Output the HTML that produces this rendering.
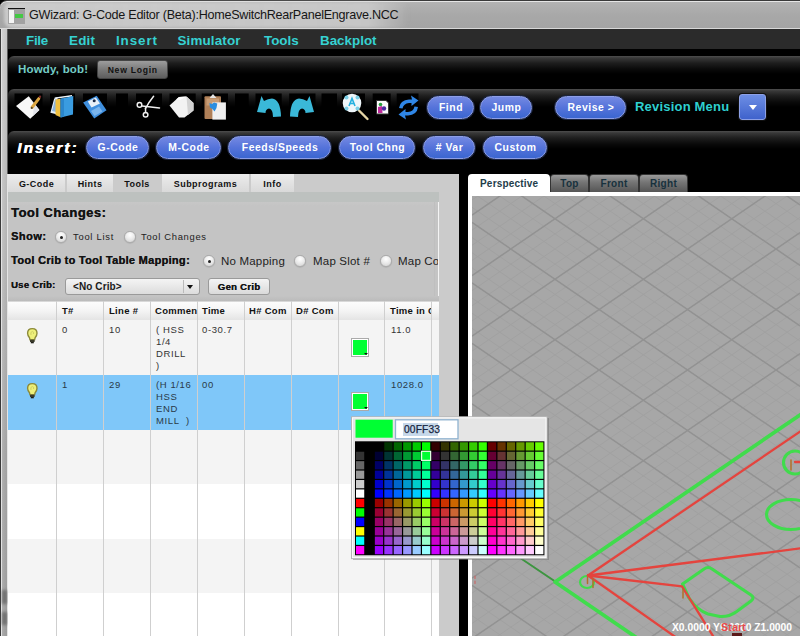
<!DOCTYPE html>
<html><head><meta charset="utf-8">
<style>
*{box-sizing:border-box}
html,body{margin:0;padding:0;width:800px;height:636px;overflow:hidden;background:#000;font-family:"Liberation Sans",sans-serif}
.a{position:absolute}
.t{position:absolute;white-space:nowrap;line-height:1}
#title{left:0;top:0;width:800px;height:30px;background:linear-gradient(#b4b4b4,#a8a8a8 50%,#a4a4a4);border-top:1px solid #3a3a3a;border-bottom:1px solid #2a2a2a;border-top-left-radius:7px;box-shadow:inset 0 1px 0 #e6e6e6,inset 0 -1px 0 #d8d8d8}
#glow{left:4px;top:2px;width:405px;height:26px;background:linear-gradient(90deg,rgba(215,215,215,.7),rgba(205,205,205,.8) 90%,rgba(200,200,200,0));border-radius:8px;filter:blur(1.5px)}
#lframe{left:0;top:29px;width:8px;height:607px;background:linear-gradient(90deg,#4a4a4a 0,#4a4a4a 1px,#e4e4e4 1px,#d0d0d0 2px,#b4b4b4 3px,#b8b8b8 6px,#dedede 6px,#dcdcdc 7px,#6c6c6c 7px)}
#menu{left:8px;top:30px;width:792px;height:19px;background:#2b2b2b}
.mi{position:absolute;top:34px;font-weight:bold;font-size:13.4px;color:#36d2d2;line-height:1}
.panel{position:absolute;left:8px;width:792px;border-radius:6px 0 0 0;background:linear-gradient(#4e4e4e 0,#383838 2px,#1e1e1e 7px,#0a0a0a 13px,#000 18px)}
.bb{position:absolute;height:23px;border-radius:12px;background:linear-gradient(#7489e2,#5573da 50%,#3b66d0);border:1px solid #8d9ee6;box-shadow:0 0 0 1px #1a2440;color:#fff;font-weight:bold;font-size:10.4px;text-align:center;line-height:21px;letter-spacing:.55px;text-indent:1px}
.tab{position:absolute;top:174px;height:18px;background:linear-gradient(#ececec,#d9d9d9);color:#111;font-weight:bold;font-size:9px;text-align:center;line-height:20px;letter-spacing:.45px}
.lb{position:absolute;font-weight:bold;color:#141414;line-height:1;white-space:nowrap;text-shadow:.25px 0 0 #141414}
.rad{position:absolute;width:11.5px;height:11.5px;margin:.25px 0 0 .25px;border-radius:50%;background:radial-gradient(circle at 50% 30%,#fff,#ececec 45%,#cfcfcf);border:1px solid #a8a8a8;box-shadow:0 .5px 1px rgba(0,0,0,.15)}
.rad.on::after{content:"";position:absolute;left:3.25px;top:3.25px;width:3px;height:3px;border-radius:50%;background:#222}
.rt{position:absolute;font-size:11.5px;color:#222;line-height:1;white-space:nowrap;letter-spacing:.2px}
.col{position:absolute;top:301px;width:1px;height:335px;background:#cfcfcf}
.hd{position:absolute;top:306px;font-weight:bold;font-size:9.5px;color:#111;line-height:1;white-space:nowrap;letter-spacing:.3px}
.cell{position:absolute;font-size:9.5px;color:#333;line-height:12px;white-space:nowrap;letter-spacing:.6px}
.rtab{position:absolute;top:174px;height:18px;border-radius:4px 4px 0 0;background:linear-gradient(#9a9a9a,#777 40%,#555);border:1px solid #333;border-bottom:none;color:#17313d;font-weight:bold;font-size:10px;text-align:center;line-height:17px;letter-spacing:.3px}
.ico{position:absolute;top:94px;height:27px;background:#0f0f0f}
</style></head><body>

<!-- title bar -->
<div id="title" class="a"></div><div id="glow" class="a"></div>
<div class="a" style="left:8px;top:8px;width:16.5px;height:15.5px;background:#a2a2a2;border-top:1.6px solid #111"></div>
<div class="a" style="left:9px;top:9.6px;width:4.5px;height:13.6px;background:#f4f4f4"></div>
<div class="a" style="left:15px;top:14.2px;width:8.3px;height:4px;background:#44c844"></div>
<div class="t" style="left:29px;top:9px;font-size:12.6px;color:#161616;letter-spacing:-0.27px">GWizard: G-Code Editor (Beta):HomeSwitchRearPanelEngrave.NCC</div>

<div class="a" style="left:0;top:29px;width:1px;height:607px;background:#3a3a3a"></div>
<div class="a" style="left:1px;top:29px;width:1px;height:607px;background:#e2e2e2"></div>
<div class="a" style="left:2px;top:29px;width:5px;height:607px;background:linear-gradient(90deg,rgba(255,255,255,.12),rgba(0,0,0,0) 50%,rgba(0,0,0,.04)),linear-gradient(#cbcbcb,#bababa 35%,#a8a8a8 70%,#a2a2a2)"></div>
<div class="a" style="left:7px;top:29px;width:1px;height:145px;background:#5a5a5a"></div>
<div class="a" style="left:7px;top:174px;width:1px;height:462px;background:#e4e4e4"></div>
<div class="a" style="left:2px;top:590px;width:5px;height:14px;background:#5a5a5a;filter:blur(1.5px);opacity:.7"></div>
<div class="a" style="left:2px;top:612px;width:5px;height:13px;background:#5a5a5a;filter:blur(1.5px);opacity:.7"></div>
<div id="menu" class="a"></div>
<div class="mi" style="left:26px;letter-spacing:-.3px">File</div>
<div class="mi" style="left:69px;letter-spacing:.2px">Edit</div>
<div class="mi" style="left:116px;letter-spacing:.9px">Insert</div>
<div class="mi" style="left:177.5px;letter-spacing:.15px">Simulator</div>
<div class="mi" style="left:264px">Tools</div>
<div class="mi" style="left:320px">Backplot</div>

<!-- panel 1 -->
<div class="panel" style="top:56px;height:31px"></div>
<div class="t" style="left:18px;top:64px;font-weight:bold;font-size:11.5px;color:#74cdc6;letter-spacing:.2px">Howdy, bob!</div>
<div class="a" style="left:97px;top:60px;width:71px;height:19px;border-radius:3px;background:linear-gradient(#9d9d9d,#7a7a7a 50%,#5e5e5e);border:1px solid #444"></div>
<div class="t" style="left:97px;top:65.5px;width:71px;text-align:center;font-weight:bold;font-size:8.6px;color:#111;letter-spacing:.75px;text-indent:.5px">New Login</div>

<!-- panel 2 toolbar -->
<div class="panel" style="top:89px;height:39px"></div>
<svg class="a" style="left:0;top:0" width="470" height="130" viewBox="0 0 470 130">
<g fill="#000"><rect x="14.5" y="93.5" width="28.0" height="28"/><rect x="50.0" y="93.5" width="25.0" height="28"/><rect x="83.0" y="93.5" width="24.0" height="28"/><rect x="116.0" y="93.5" width="12.0" height="28"/><rect x="136.0" y="93.5" width="26.0" height="28"/><rect x="169.5" y="93.5" width="26.2" height="28"/><rect x="201.7" y="93.5" width="26.3" height="28"/><rect x="235.0" y="93.5" width="13.7" height="28"/><rect x="255.5" y="93.5" width="26.2" height="28"/><rect x="289.2" y="93.5" width="26.3" height="28"/><rect x="321.5" y="93.5" width="15.5" height="28"/><rect x="342.0" y="93.5" width="23.0" height="28"/><rect x="372.7" y="93.5" width="18.0" height="28"/><rect x="396.7" y="93.5" width="21.8" height="28"/></g>
<!-- new doc -->
<path d="M16,106 L28.7,96.3 L39.4,110 L30.2,118.7 Z" fill="#f8f8f8"/>
<path d="M34,103 L39.4,110 L33,116 Z" fill="#e2e4ea"/>
<line x1="32" y1="107.5" x2="38.8" y2="98.6" stroke="#dca640" stroke-width="3" stroke-linecap="round"/>
<line x1="31.3" y1="108.6" x2="32.3" y2="107.2" stroke="#333" stroke-width="1.6"/>
<circle cx="40" cy="96.8" r="1.2" fill="#7a2a2a"/>
<!-- open book -->
<path d="M50.4,112.8 L54.2,98.4 L57.5,97.2 L57.5,114.5 Z" fill="#e8f0f8"/>
<path d="M52,111 L55,99.5 L56.5,99 L56.5,112 Z" fill="#8ab4e0"/>
<path d="M54.5,97.5 L72,95 L72,96.5 L55.5,98.8 Z" fill="#eef6fc"/>
<path d="M55.5,99.6 L60.6,98.8 L60.6,117.3 L55.5,115 Z" fill="#f0c040"/>
<path d="M60.6,98.8 L73.3,96 L73,114.5 L60.6,117.5 Z" fill="#3a9ce0"/>
<path d="M60.6,98.8 L64,98 L64,116.7 L60.6,117.5 Z" fill="#2a86cc"/>
<!-- floppy -->
<path d="M83.1,102.6 L96.7,95.8 L106.5,110.3 L94.2,118.4 Z" fill="#3f8fde"/>
<path d="M87.8,101.5 L95.8,97.5 L100,103.5 L91.5,107.5 Z" fill="#e8f0f8"/>
<circle cx="94.2" cy="100.8" r="1.5" fill="#1a2a4a"/>
<path d="M91,111 L99,106.5 L102.5,111.5 L94.5,116 Z" fill="#7ab4ec"/>
<!-- scissors -->
<g stroke="#f0f0f0" stroke-width="1.5" fill="none" stroke-linecap="round">
<path d="M145.5,108.5 Q149,102 153.6,96.3"/>
<line x1="142" y1="106" x2="159.5" y2="108"/>
<line x1="145.5" y1="108" x2="145.6" y2="112.4"/>
<circle cx="139.5" cy="104.9" r="2.3"/>
<circle cx="145.6" cy="114.7" r="2.3"/>
</g>
<!-- copy -->
<path d="M169.5,105.5 L179,97 L186.5,96.5 L193.5,103 L193.5,110.5 L184.5,117.5 L179,117.5 Z" fill="#f2f2f2"/>
<path d="M186.5,96.5 L193.5,103 L193.5,110.5 L188,115 Z" fill="#d2d2d2"/>
<path d="M176,99.5 L179,97 L186.5,96.5 L180,100 Z" fill="#ffffff"/>
<!-- paste -->
<rect x="204.5" y="96.3" width="16.5" height="22.7" rx="1" fill="#b08058"/>
<rect x="206.5" y="98.5" width="12.5" height="7" fill="#c89c74"/>
<path d="M209.5,98 L213,94 L216.5,98 Z" fill="#e4e4e4"/>
<rect x="212.4" y="102.4" width="13.5" height="17.2" fill="#f0f0f0"/>
<path d="M209.4,103 L212,104 L214,102.4 L217.3,103.5 L216.5,108 L214.5,111.6 L212.5,109 L210,107.5 Z" fill="#2a8ee0"/>
<!-- undo -->
<path id="undo" d="M257,112 L261.5,96 L264,101 Q268,98.5 272,98.5 Q280.5,99.5 281,116.5 L273,117 Q273,109 269,108.5 Q265.5,109 265.5,113 Z" fill="#3ab8d8"/>
<!-- redo -->
<path d="M257,112 L261.5,96 L264,101 Q268,98.5 272,98.5 Q280.5,99.5 281,116.5 L273,117 Q273,109 269,108.5 Q265.5,109 265.5,113 Z" fill="#3ab8d8" transform="translate(571,0) scale(-1,1)"/>
<!-- magnifier -->
<line x1="359" y1="110.5" x2="367.5" y2="119" stroke="#e6d6a6" stroke-width="2.4" stroke-linecap="round"/>
<circle cx="352" cy="103" r="9.3" fill="#eef6fa"/>
<circle cx="346.5" cy="97.5" r="2" fill="#7cd0e8"/><circle cx="357.5" cy="97.5" r="2" fill="#7cd0e8"/><circle cx="346.5" cy="108.5" r="2" fill="#7cd0e8"/><circle cx="357.5" cy="108.5" r="2" fill="#7cd0e8"/>
<path d="M349,106 L352,98.5 L355,106 M350.2,103.5 L353.8,103.5" stroke="#22b0e0" stroke-width="1.6" fill="none"/>
<!-- small doc -->
<path d="M376.5,100.5 L386,100.5 L388.5,103 L388.5,114 L376.5,114 Z" fill="#fafafa" stroke="#333" stroke-width="1"/>
<circle cx="380.5" cy="104.5" r="1.8" fill="#2aa040"/>
<path d="M378,107 L382,106 L382.5,113 L378,113 Z" fill="#c02a9a"/>
<circle cx="384" cy="108.5" r="2.2" fill="#4a2aa0"/>
<!-- refresh -->
<path d="M399,108 Q400,100 409,99.5 L412,99.5 L411,95.5 L418.5,100.5 L411.5,106 L411.5,103 L409,103 Q403.5,103.5 402.5,108.5 Z" fill="#2f86e6"/>
<path d="M418,107 Q417,115 408,115.5 L405,115.5 L406,119.5 L398.5,114.5 L405.5,109 L405.5,112 L408,112 Q413.5,111.5 414.5,106.5 Z" fill="#2f86e6"/>
</svg>


<div class="bb" style="left:427px;top:96px;width:47px">Find</div>
<div class="bb" style="left:480px;top:96px;width:52px">Jump</div>
<div class="bb" style="left:555px;top:96px;width:71px">Revise &gt;</div>
<div class="t" style="left:635px;top:100px;font-weight:bold;font-size:13px;color:#2fd0d0;letter-spacing:.2px">Revision Menu</div>
<div class="a" style="left:739px;top:94px;width:27px;height:26px;border-radius:3px;background:linear-gradient(#6d8ee4,#3f62cc);border:1px solid #8da0e6;box-shadow:0 0 0 1px #111"></div>
<div class="a" style="left:748.5px;top:104.5px;width:0;height:0;border-left:4.5px solid transparent;border-right:4.5px solid transparent;border-top:5.5px solid #fff"></div>

<!-- panel 3 insert -->
<div class="panel" style="top:131px;height:43px"></div>
<div class="t" style="left:17px;top:140px;font-weight:bold;font-style:italic;font-size:15.5px;color:#fff;letter-spacing:2px;text-shadow:.6px 0 0 #fff">Insert:</div>
<div class="bb" style="left:86px;top:136px;width:63px">G-Code</div>
<div class="bb" style="left:156px;top:136px;width:65px">M-Code</div>
<div class="bb" style="left:228px;top:136px;width:103px">Feeds/Speeds</div>
<div class="bb" style="left:339px;top:136px;width:76px">Tool Chng</div>
<div class="bb" style="left:423px;top:136px;width:52px"># Var</div>
<div class="bb" style="left:483px;top:136px;width:64px">Custom</div>

<!-- left panel -->
<div class="a" style="left:8px;top:174px;width:451px;height:462px;background:#cbcbcb"></div>
<div class="tab" style="left:8px;width:57px">G-Code</div>
<div class="tab" style="left:67px;width:46px">Hints</div>
<div class="tab" style="left:114px;width:46px;background:#cbcbcb;line-height:21px">Tools</div>
<div class="tab" style="left:162px;width:87px">Subprograms</div>
<div class="tab" style="left:251px;width:43px">Info</div>
<div class="a" style="left:8px;top:192px;width:431px;height:10px;background:#bdc1bf"></div>
<div class="a" style="left:8px;top:202px;width:431px;height:434px;background:linear-gradient(#c7c7c7,#c4c4c4 4px)"></div>
<div class="a" style="left:438px;top:202px;width:1px;height:434px;background:#f4f4f4"></div><div class="a" style="left:434px;top:202px;width:1px;height:99px;background:#bfbfbf"></div>

<div class="lb" style="left:11px;top:206px;font-size:13px;letter-spacing:.45px">Tool Changes:</div>
<div class="lb" style="left:11px;top:231px;font-size:11px;letter-spacing:.45px">Show:</div>
<div class="rad on" style="left:55px;top:231px"></div>
<div class="rt" style="left:73px;top:231.5px;font-size:9.4px;letter-spacing:.75px">Tool List</div>
<div class="rad" style="left:124px;top:231px"></div>
<div class="rt" style="left:141px;top:231.5px;font-size:9.4px;letter-spacing:.7px">Tool Changes</div>

<div class="lb" style="left:11px;top:255px;font-size:11px;letter-spacing:.3px">Tool Crib to Tool Table Mapping:</div>
<div class="rad on" style="left:203px;top:255px"></div>
<div class="rt" style="left:221px;top:256px">No Mapping</div>
<div class="rad" style="left:294px;top:255px"></div>
<div class="rt" style="left:313px;top:256px">Map Slot #</div>
<div class="rad" style="left:380px;top:255px"></div>
<div style="position:absolute;left:398px;top:250px;width:40px;height:20px;overflow:hidden"><div class="rt" style="left:0;top:6px">Map Coords</div></div>

<div class="lb" style="left:11px;top:280px;font-size:9.5px;letter-spacing:.25px">Use Crib:</div>
<div class="a" style="left:65px;top:278px;width:135px;height:17px;border-radius:3px;background:linear-gradient(#f4f4f4,#dcdcdc);border:1px solid #9a9a9a"></div>
<div class="a" style="left:183px;top:280px;width:1px;height:13px;background:#bbb"></div>
<div class="a" style="left:187px;top:285px;width:0;height:0;border-left:3.5px solid transparent;border-right:3.5px solid transparent;border-top:4.5px solid #111"></div>
<div class="lb" style="left:73px;top:282px;font-size:10px;letter-spacing:.1px;text-shadow:none;color:#1a1a1a">&lt;No Crib&gt;</div>
<div class="a" style="left:208px;top:278px;width:62px;height:17px;border-radius:3px;background:linear-gradient(#f4f4f4,#dadada);border:1px solid #9a9a9a"></div>
<div class="lb" style="left:208px;top:282px;width:62px;text-align:center;font-size:9.5px;letter-spacing:.3px">Gen Crib</div>

<!-- table -->
<div class="a" style="left:8px;top:296px;width:431px;height:6px;background:linear-gradient(#c4c4c4,#b9b9b9)"></div><div class="a" style="left:8px;top:301px;width:431px;height:1px;background:#d8d8d8"></div><div class="a" style="left:8px;top:302px;width:431px;height:18px;background:linear-gradient(#fcfcfc,#f4f4f4 50%,#e4e4e4)"></div><div class="a" style="left:8px;top:320px;width:431px;height:1px;background:#cbcbcb"></div>
<div class="a" style="left:8px;top:320px;width:431px;height:55px;background:#f4f4f4"></div>
<div class="a" style="left:8px;top:375px;width:431px;height:55px;background:#7fc7f9"></div>
<div class="a" style="left:8px;top:430px;width:431px;height:54px;background:#f4f4f4"></div>
<div class="a" style="left:8px;top:484px;width:431px;height:55px;background:#fff"></div>
<div class="a" style="left:8px;top:539px;width:431px;height:54px;background:#f4f4f4"></div>
<div class="a" style="left:8px;top:593px;width:431px;height:43px;background:#fff"></div>
<div class="col" style="left:56px"></div>
<div class="col" style="left:103px"></div>
<div class="col" style="left:150px"></div>
<div class="col" style="left:197px"></div>
<div class="col" style="left:244px"></div>
<div class="col" style="left:291px"></div>
<div class="col" style="left:338px"></div>
<div class="col" style="left:384px"></div>
<div class="col" style="left:431px"></div>

<div class="hd" style="left:62px">T#</div>
<div class="hd" style="left:109px">Line #</div>
<div style="position:absolute;left:151px;top:301px;width:46px;height:19px;overflow:hidden"><div class="hd" style="left:4px;top:5px">Comment</div></div>
<div class="hd" style="left:202px">Time</div>
<div style="position:absolute;left:245px;top:301px;width:43px;height:19px;overflow:hidden"><div class="hd" style="left:4px;top:5px">H# Com</div></div>
<div style="position:absolute;left:292px;top:301px;width:43px;height:19px;overflow:hidden"><div class="hd" style="left:4px;top:5px">D# Com</div></div>
<div style="position:absolute;left:386px;top:301px;width:45px;height:19px;overflow:hidden"><div class="hd" style="left:4px;top:5px">Time in Cut</div></div>

<div class="cell" style="left:62px;top:323.5px">0</div>
<div class="cell" style="left:109px;top:323.5px">10</div>
<div class="cell" style="left:156px;top:323.5px">( HSS<br>1/4<br>DRILL<br>)</div>
<div class="cell" style="left:202px;top:323.5px">0-30.7</div>
<div class="cell" style="left:391px;top:323.5px">11.0</div>
<div class="cell" style="left:62px;top:378.5px;color:#2a3a48">1</div>
<div class="cell" style="left:109px;top:378.5px;color:#2a3a48">29</div>
<div class="cell" style="left:156px;top:378.5px;color:#2a3a48">(H 1/16<br>HSS<br>END<br>MILL&nbsp; )</div>
<div class="cell" style="left:202px;top:378.5px;color:#2a3a48">00</div>
<div class="cell" style="left:391px;top:378.5px;color:#2a3a48">1028.0</div>

<!-- swatches -->
<div class="a" style="left:351px;top:338px;width:18px;height:19px;background:#fff;border:1px solid #aaa"><div class="a" style="left:1px;top:1px;width:14px;height:15px;background:#00ff33"></div><div class="a" style="left:12px;top:14px;border-left:2px solid transparent;border-right:2px solid transparent;border-top:2px solid #111"></div></div>
<div class="a" style="left:351px;top:392px;width:18px;height:19px;background:#fff;border:1px solid #aaa"><div class="a" style="left:1px;top:1px;width:14px;height:15px;background:#00ff33"></div><div class="a" style="left:12px;top:14px;border-left:2px solid transparent;border-right:2px solid transparent;border-top:2px solid #111"></div></div>

<!-- bulbs -->
<svg class="a" style="left:20px;top:320px" width="30" height="80" viewBox="20 320 30 80"><g><path d="M32.3,328.6 Q37,328.6 37,333.3 Q37,335.6 35.1,337.8 L34.6,339.8 L30,339.8 L29.5,337.8 Q27.6,335.6 27.6,333.3 Q27.6,328.6 32.3,328.6 Z" fill="#eef07a" stroke="#8c8a3a" stroke-width="1.4"/>
<path d="M31,335 Q30,332 32.3,331.5 Q34.3,331.8 33.5,334" stroke="#c8c860" stroke-width="0.8" fill="none"/>
<rect x="30" y="339.8" width="4.6" height="2.2" fill="#3a3a2a"/>
<rect x="30.8" y="342" width="3" height="1.3" fill="#1e1e16"/></g><g transform="translate(0,55)"><path d="M32.3,328.6 Q37,328.6 37,333.3 Q37,335.6 35.1,337.8 L34.6,339.8 L30,339.8 L29.5,337.8 Q27.6,335.6 27.6,333.3 Q27.6,328.6 32.3,328.6 Z" fill="#eef07a" stroke="#8c8a3a" stroke-width="1.4"/>
<path d="M31,335 Q30,332 32.3,331.5 Q34.3,331.8 33.5,334" stroke="#c8c860" stroke-width="0.8" fill="none"/>
<rect x="30" y="339.8" width="4.6" height="2.2" fill="#3a3a2a"/>
<rect x="30.8" y="342" width="3" height="1.3" fill="#1e1e16"/></g></svg>


<!-- right side -->
<div class="a" style="left:468px;top:174px;width:82px;height:22px;background:#fff;border-radius:4px 4px 0 0"></div>
<div class="t" style="left:480px;top:179px;font-weight:bold;font-size:10px;color:#1e3d4a;letter-spacing:.2px">Perspective</div>
<div class="rtab" style="left:550px;width:39px">Top</div>
<div class="rtab" style="left:589px;width:50px">Front</div>
<div class="rtab" style="left:639px;width:49px">Right</div>
<div class="a" style="left:468px;top:192px;width:332px;height:444px;background:#fff"></div>
<svg class="a" style="left:472px;top:196px" width="328" height="440" viewBox="472 196 328 440">
<rect x="472" y="196" width="328" height="440" fill="#a7a7a7"/>
<g stroke="#a1a1a1" stroke-width="1" opacity="1"><line x1="472" y1="-19.55" x2="800" y2="204.93"/><line x1="472" y1="-4.43" x2="800" y2="220.05"/><line x1="472" y1="10.70" x2="800" y2="235.18"/><line x1="472" y1="25.82" x2="800" y2="250.30"/><line x1="472" y1="40.95" x2="800" y2="265.43"/><line x1="472" y1="56.07" x2="800" y2="280.55"/><line x1="472" y1="71.20" x2="800" y2="295.68"/><line x1="472" y1="86.32" x2="800" y2="310.80"/><line x1="472" y1="101.45" x2="800" y2="325.93"/><line x1="472" y1="116.57" x2="800" y2="341.05"/><line x1="472" y1="131.70" x2="800" y2="356.18"/><line x1="472" y1="146.82" x2="800" y2="371.30"/><line x1="472" y1="161.95" x2="800" y2="386.43"/><line x1="472" y1="177.07" x2="800" y2="401.55"/><line x1="472" y1="192.20" x2="800" y2="416.68"/><line x1="472" y1="207.32" x2="800" y2="431.80"/><line x1="472" y1="222.45" x2="800" y2="446.93"/><line x1="472" y1="237.57" x2="800" y2="462.05"/><line x1="472" y1="252.70" x2="800" y2="477.18"/><line x1="472" y1="267.82" x2="800" y2="492.30"/><line x1="472" y1="282.95" x2="800" y2="507.43"/><line x1="472" y1="298.07" x2="800" y2="522.55"/><line x1="472" y1="313.20" x2="800" y2="537.68"/><line x1="472" y1="328.32" x2="800" y2="552.80"/><line x1="472" y1="343.45" x2="800" y2="567.93"/><line x1="472" y1="358.57" x2="800" y2="583.05"/><line x1="472" y1="373.70" x2="800" y2="598.18"/><line x1="472" y1="388.82" x2="800" y2="613.30"/><line x1="472" y1="403.95" x2="800" y2="628.43"/><line x1="472" y1="419.07" x2="800" y2="643.55"/><line x1="472" y1="434.20" x2="800" y2="658.68"/><line x1="472" y1="449.32" x2="800" y2="673.80"/><line x1="472" y1="464.45" x2="800" y2="688.93"/><line x1="472" y1="479.57" x2="800" y2="704.05"/><line x1="472" y1="494.70" x2="800" y2="719.18"/><line x1="472" y1="509.82" x2="800" y2="734.30"/><line x1="472" y1="524.95" x2="800" y2="749.43"/><line x1="472" y1="540.07" x2="800" y2="764.55"/><line x1="472" y1="555.20" x2="800" y2="779.68"/><line x1="472" y1="570.32" x2="800" y2="794.80"/><line x1="472" y1="585.45" x2="800" y2="809.93"/><line x1="472" y1="600.57" x2="800" y2="825.05"/><line x1="472" y1="615.70" x2="800" y2="840.18"/><line x1="472" y1="630.82" x2="800" y2="855.30"/><line x1="472" y1="199.93" x2="800" y2="-24.55"/><line x1="472" y1="215.05" x2="800" y2="-9.43"/><line x1="472" y1="230.18" x2="800" y2="5.70"/><line x1="472" y1="245.30" x2="800" y2="20.82"/><line x1="472" y1="260.43" x2="800" y2="35.95"/><line x1="472" y1="275.55" x2="800" y2="51.07"/><line x1="472" y1="290.68" x2="800" y2="66.20"/><line x1="472" y1="305.80" x2="800" y2="81.32"/><line x1="472" y1="320.93" x2="800" y2="96.45"/><line x1="472" y1="336.05" x2="800" y2="111.57"/><line x1="472" y1="351.18" x2="800" y2="126.70"/><line x1="472" y1="366.30" x2="800" y2="141.82"/><line x1="472" y1="381.43" x2="800" y2="156.95"/><line x1="472" y1="396.55" x2="800" y2="172.07"/><line x1="472" y1="411.68" x2="800" y2="187.20"/><line x1="472" y1="426.80" x2="800" y2="202.32"/><line x1="472" y1="441.93" x2="800" y2="217.45"/><line x1="472" y1="457.05" x2="800" y2="232.57"/><line x1="472" y1="472.18" x2="800" y2="247.70"/><line x1="472" y1="487.30" x2="800" y2="262.82"/><line x1="472" y1="502.43" x2="800" y2="277.95"/><line x1="472" y1="517.55" x2="800" y2="293.07"/><line x1="472" y1="532.68" x2="800" y2="308.20"/><line x1="472" y1="547.80" x2="800" y2="323.32"/><line x1="472" y1="562.93" x2="800" y2="338.45"/><line x1="472" y1="578.05" x2="800" y2="353.57"/><line x1="472" y1="593.18" x2="800" y2="368.70"/><line x1="472" y1="608.30" x2="800" y2="383.82"/><line x1="472" y1="623.43" x2="800" y2="398.95"/><line x1="472" y1="638.55" x2="800" y2="414.07"/><line x1="472" y1="653.68" x2="800" y2="429.20"/><line x1="472" y1="668.80" x2="800" y2="444.32"/><line x1="472" y1="683.93" x2="800" y2="459.45"/><line x1="472" y1="699.05" x2="800" y2="474.57"/><line x1="472" y1="714.18" x2="800" y2="489.70"/><line x1="472" y1="729.30" x2="800" y2="504.82"/><line x1="472" y1="744.43" x2="800" y2="519.95"/><line x1="472" y1="759.55" x2="800" y2="535.07"/><line x1="472" y1="774.68" x2="800" y2="550.20"/><line x1="472" y1="789.80" x2="800" y2="565.32"/><line x1="472" y1="804.93" x2="800" y2="580.45"/><line x1="472" y1="820.05" x2="800" y2="595.57"/><line x1="472" y1="835.18" x2="800" y2="610.70"/><line x1="472" y1="850.30" x2="800" y2="625.82"/><line x1="472" y1="865.43" x2="800" y2="640.95"/></g>
<g stroke="#929292" stroke-width="1.5" opacity="1"><line x1="472" y1="-19.55" x2="800" y2="204.93"/><line x1="472" y1="40.95" x2="800" y2="265.43"/><line x1="472" y1="101.45" x2="800" y2="325.93"/><line x1="472" y1="161.95" x2="800" y2="386.43"/><line x1="472" y1="222.45" x2="800" y2="446.93"/><line x1="472" y1="282.95" x2="800" y2="507.43"/><line x1="472" y1="343.45" x2="800" y2="567.93"/><line x1="472" y1="403.95" x2="800" y2="628.43"/><line x1="472" y1="464.45" x2="800" y2="688.93"/><line x1="472" y1="524.95" x2="800" y2="749.43"/><line x1="472" y1="585.45" x2="800" y2="809.93"/><line x1="472" y1="215.05" x2="800" y2="-9.43"/><line x1="472" y1="275.55" x2="800" y2="51.07"/><line x1="472" y1="336.05" x2="800" y2="111.57"/><line x1="472" y1="396.55" x2="800" y2="172.07"/><line x1="472" y1="457.05" x2="800" y2="232.57"/><line x1="472" y1="517.55" x2="800" y2="293.07"/><line x1="472" y1="578.05" x2="800" y2="353.57"/><line x1="472" y1="638.55" x2="800" y2="414.07"/><line x1="472" y1="699.05" x2="800" y2="474.57"/><line x1="472" y1="759.55" x2="800" y2="535.07"/><line x1="472" y1="820.05" x2="800" y2="595.57"/></g>
<g fill="none" stroke-linecap="round" stroke-linejoin="round">
<line x1="521" y1="558.5" x2="556" y2="582" stroke="#3c963f" stroke-width="1.8"/>
<polyline points="805,411.5 555,582 640,640" stroke="#40dc4c" stroke-width="3.7"/>
<ellipse cx="587" cy="582" rx="7" ry="6" stroke="#40dc4c" stroke-width="2.2"/>
<ellipse cx="795" cy="462.5" rx="11.5" ry="11.5" stroke="#40dc4c" stroke-width="3.1"/>
<ellipse cx="791" cy="514.5" rx="24.5" ry="15" stroke="#40dc4c" stroke-width="3.1"/>
<path d="M682.5,584 L704,569 Q708,566 712,569 L751,595 Q755,598 751,601 L736,612 Q729,617 720,616.5 L708,614 Q697,610 689,598 Z" stroke="#40dc4c" stroke-width="3.1"/>
<g stroke="#e4443e" stroke-width="2.3">
<line x1="588" y1="575.5" x2="805" y2="428.2"/>
<line x1="588" y1="575.5" x2="805" y2="547.8"/>
<polyline points="588,575.5 682,586.4 715.5,640"/>
<line x1="588" y1="575.5" x2="679.7" y2="640"/>
<line x1="795" y1="462" x2="805" y2="462"/>
</g>
<g stroke="#b0702a" stroke-width="1.5"><line x1="587.5" y1="577.5" x2="587.5" y2="583.5"/><line x1="593" y1="579" x2="593" y2="587.5"/><line x1="683" y1="589" x2="683" y2="598"/><line x1="791" y1="460" x2="791" y2="470"/></g>
<g stroke="#c86a6a" stroke-width="1.2"><line x1="475" y1="576" x2="475" y2="578.5"/><line x1="475" y1="581" x2="475" y2="583.5"/></g>
</g>
<text x="672" y="630.5" font-family="Liberation Sans" font-weight="bold" font-size="10.3" fill="#fff">X0.0000 Y0.0000 Z1.0000</text>
<text x="721" y="631" font-family="Liberation Sans" font-weight="bold" font-size="10.5" fill="#e84848" letter-spacing="0.2">Start</text>
<rect x="732" y="633" width="10" height="3" fill="#5a1a1a"/>
</svg>

<svg class="a" style="left:0;top:0" width="800" height="636" viewBox="0 0 800 636">
<rect x="353" y="418" width="196" height="142" fill="#6a6a6a" opacity="0.45"/>
<rect x="351.5" y="416.8" width="195.5" height="141.8" fill="#e5e5e5" stroke="#b4b4b4" stroke-width="1"/>
<rect x="352.5" y="417.8" width="193.5" height="139.8" fill="none" stroke="#fbfbfb" stroke-width="1"/>
<rect x="355.5" y="419.7" width="37.2" height="18" fill="#00ff33"/>
<rect x="395.5" y="419.8" width="62.5" height="19" fill="#fff" stroke="#8fb2cf" stroke-width="1.3"/>
<rect x="403" y="423" width="35" height="13" fill="#c6d8ea"/>
<text x="404" y="433" font-family="Liberation Sans" font-size="10.2" fill="#16243e" letter-spacing="0.15" stroke="#16243e" stroke-width="0.25">00FF33</text>
<rect x="355.00" y="441.30" width="189.40" height="113.96" fill="#000"/>
<rect x="384.29" y="442.30" width="8.23" height="8.23" fill="#003300"/>
<rect x="393.72" y="442.30" width="8.23" height="8.23" fill="#006600"/>
<rect x="403.15" y="442.30" width="8.23" height="8.23" fill="#009900"/>
<rect x="412.58" y="442.30" width="8.23" height="8.23" fill="#00cc00"/>
<rect x="422.01" y="442.30" width="8.23" height="8.23" fill="#00ff00"/>
<rect x="431.44" y="442.30" width="8.23" height="8.23" fill="#330000"/>
<rect x="440.87" y="442.30" width="8.23" height="8.23" fill="#333300"/>
<rect x="450.30" y="442.30" width="8.23" height="8.23" fill="#336600"/>
<rect x="459.73" y="442.30" width="8.23" height="8.23" fill="#339900"/>
<rect x="469.16" y="442.30" width="8.23" height="8.23" fill="#33cc00"/>
<rect x="478.59" y="442.30" width="8.23" height="8.23" fill="#33ff00"/>
<rect x="488.02" y="442.30" width="8.23" height="8.23" fill="#660000"/>
<rect x="497.45" y="442.30" width="8.23" height="8.23" fill="#663300"/>
<rect x="506.88" y="442.30" width="8.23" height="8.23" fill="#666600"/>
<rect x="516.31" y="442.30" width="8.23" height="8.23" fill="#669900"/>
<rect x="525.74" y="442.30" width="8.23" height="8.23" fill="#66cc00"/>
<rect x="535.17" y="442.30" width="8.23" height="8.23" fill="#66ff00"/>
<rect x="356.00" y="451.73" width="8.23" height="8.23" fill="#333333"/>
<rect x="374.86" y="451.73" width="8.23" height="8.23" fill="#000033"/>
<rect x="384.29" y="451.73" width="8.23" height="8.23" fill="#003333"/>
<rect x="393.72" y="451.73" width="8.23" height="8.23" fill="#006633"/>
<rect x="403.15" y="451.73" width="8.23" height="8.23" fill="#009933"/>
<rect x="412.58" y="451.73" width="8.23" height="8.23" fill="#00cc33"/>
<rect x="422.01" y="451.73" width="8.23" height="8.23" fill="#00ff33"/>
<rect x="431.44" y="451.73" width="8.23" height="8.23" fill="#330033"/>
<rect x="440.87" y="451.73" width="8.23" height="8.23" fill="#333333"/>
<rect x="450.30" y="451.73" width="8.23" height="8.23" fill="#336633"/>
<rect x="459.73" y="451.73" width="8.23" height="8.23" fill="#339933"/>
<rect x="469.16" y="451.73" width="8.23" height="8.23" fill="#33cc33"/>
<rect x="478.59" y="451.73" width="8.23" height="8.23" fill="#33ff33"/>
<rect x="488.02" y="451.73" width="8.23" height="8.23" fill="#660033"/>
<rect x="497.45" y="451.73" width="8.23" height="8.23" fill="#663333"/>
<rect x="506.88" y="451.73" width="8.23" height="8.23" fill="#666633"/>
<rect x="516.31" y="451.73" width="8.23" height="8.23" fill="#669933"/>
<rect x="525.74" y="451.73" width="8.23" height="8.23" fill="#66cc33"/>
<rect x="535.17" y="451.73" width="8.23" height="8.23" fill="#66ff33"/>
<rect x="356.00" y="461.16" width="8.23" height="8.23" fill="#666666"/>
<rect x="374.86" y="461.16" width="8.23" height="8.23" fill="#000066"/>
<rect x="384.29" y="461.16" width="8.23" height="8.23" fill="#003366"/>
<rect x="393.72" y="461.16" width="8.23" height="8.23" fill="#006666"/>
<rect x="403.15" y="461.16" width="8.23" height="8.23" fill="#009966"/>
<rect x="412.58" y="461.16" width="8.23" height="8.23" fill="#00cc66"/>
<rect x="422.01" y="461.16" width="8.23" height="8.23" fill="#00ff66"/>
<rect x="431.44" y="461.16" width="8.23" height="8.23" fill="#330066"/>
<rect x="440.87" y="461.16" width="8.23" height="8.23" fill="#333366"/>
<rect x="450.30" y="461.16" width="8.23" height="8.23" fill="#336666"/>
<rect x="459.73" y="461.16" width="8.23" height="8.23" fill="#339966"/>
<rect x="469.16" y="461.16" width="8.23" height="8.23" fill="#33cc66"/>
<rect x="478.59" y="461.16" width="8.23" height="8.23" fill="#33ff66"/>
<rect x="488.02" y="461.16" width="8.23" height="8.23" fill="#660066"/>
<rect x="497.45" y="461.16" width="8.23" height="8.23" fill="#663366"/>
<rect x="506.88" y="461.16" width="8.23" height="8.23" fill="#666666"/>
<rect x="516.31" y="461.16" width="8.23" height="8.23" fill="#669966"/>
<rect x="525.74" y="461.16" width="8.23" height="8.23" fill="#66cc66"/>
<rect x="535.17" y="461.16" width="8.23" height="8.23" fill="#66ff66"/>
<rect x="356.00" y="470.59" width="8.23" height="8.23" fill="#999999"/>
<rect x="374.86" y="470.59" width="8.23" height="8.23" fill="#000099"/>
<rect x="384.29" y="470.59" width="8.23" height="8.23" fill="#003399"/>
<rect x="393.72" y="470.59" width="8.23" height="8.23" fill="#006699"/>
<rect x="403.15" y="470.59" width="8.23" height="8.23" fill="#009999"/>
<rect x="412.58" y="470.59" width="8.23" height="8.23" fill="#00cc99"/>
<rect x="422.01" y="470.59" width="8.23" height="8.23" fill="#00ff99"/>
<rect x="431.44" y="470.59" width="8.23" height="8.23" fill="#330099"/>
<rect x="440.87" y="470.59" width="8.23" height="8.23" fill="#333399"/>
<rect x="450.30" y="470.59" width="8.23" height="8.23" fill="#336699"/>
<rect x="459.73" y="470.59" width="8.23" height="8.23" fill="#339999"/>
<rect x="469.16" y="470.59" width="8.23" height="8.23" fill="#33cc99"/>
<rect x="478.59" y="470.59" width="8.23" height="8.23" fill="#33ff99"/>
<rect x="488.02" y="470.59" width="8.23" height="8.23" fill="#660099"/>
<rect x="497.45" y="470.59" width="8.23" height="8.23" fill="#663399"/>
<rect x="506.88" y="470.59" width="8.23" height="8.23" fill="#666699"/>
<rect x="516.31" y="470.59" width="8.23" height="8.23" fill="#669999"/>
<rect x="525.74" y="470.59" width="8.23" height="8.23" fill="#66cc99"/>
<rect x="535.17" y="470.59" width="8.23" height="8.23" fill="#66ff99"/>
<rect x="356.00" y="480.02" width="8.23" height="8.23" fill="#cccccc"/>
<rect x="374.86" y="480.02" width="8.23" height="8.23" fill="#0000cc"/>
<rect x="384.29" y="480.02" width="8.23" height="8.23" fill="#0033cc"/>
<rect x="393.72" y="480.02" width="8.23" height="8.23" fill="#0066cc"/>
<rect x="403.15" y="480.02" width="8.23" height="8.23" fill="#0099cc"/>
<rect x="412.58" y="480.02" width="8.23" height="8.23" fill="#00cccc"/>
<rect x="422.01" y="480.02" width="8.23" height="8.23" fill="#00ffcc"/>
<rect x="431.44" y="480.02" width="8.23" height="8.23" fill="#3300cc"/>
<rect x="440.87" y="480.02" width="8.23" height="8.23" fill="#3333cc"/>
<rect x="450.30" y="480.02" width="8.23" height="8.23" fill="#3366cc"/>
<rect x="459.73" y="480.02" width="8.23" height="8.23" fill="#3399cc"/>
<rect x="469.16" y="480.02" width="8.23" height="8.23" fill="#33cccc"/>
<rect x="478.59" y="480.02" width="8.23" height="8.23" fill="#33ffcc"/>
<rect x="488.02" y="480.02" width="8.23" height="8.23" fill="#6600cc"/>
<rect x="497.45" y="480.02" width="8.23" height="8.23" fill="#6633cc"/>
<rect x="506.88" y="480.02" width="8.23" height="8.23" fill="#6666cc"/>
<rect x="516.31" y="480.02" width="8.23" height="8.23" fill="#6699cc"/>
<rect x="525.74" y="480.02" width="8.23" height="8.23" fill="#66cccc"/>
<rect x="535.17" y="480.02" width="8.23" height="8.23" fill="#66ffcc"/>
<rect x="356.00" y="489.45" width="8.23" height="8.23" fill="#ffffff"/>
<rect x="374.86" y="489.45" width="8.23" height="8.23" fill="#0000ff"/>
<rect x="384.29" y="489.45" width="8.23" height="8.23" fill="#0033ff"/>
<rect x="393.72" y="489.45" width="8.23" height="8.23" fill="#0066ff"/>
<rect x="403.15" y="489.45" width="8.23" height="8.23" fill="#0099ff"/>
<rect x="412.58" y="489.45" width="8.23" height="8.23" fill="#00ccff"/>
<rect x="422.01" y="489.45" width="8.23" height="8.23" fill="#00ffff"/>
<rect x="431.44" y="489.45" width="8.23" height="8.23" fill="#3300ff"/>
<rect x="440.87" y="489.45" width="8.23" height="8.23" fill="#3333ff"/>
<rect x="450.30" y="489.45" width="8.23" height="8.23" fill="#3366ff"/>
<rect x="459.73" y="489.45" width="8.23" height="8.23" fill="#3399ff"/>
<rect x="469.16" y="489.45" width="8.23" height="8.23" fill="#33ccff"/>
<rect x="478.59" y="489.45" width="8.23" height="8.23" fill="#33ffff"/>
<rect x="488.02" y="489.45" width="8.23" height="8.23" fill="#6600ff"/>
<rect x="497.45" y="489.45" width="8.23" height="8.23" fill="#6633ff"/>
<rect x="506.88" y="489.45" width="8.23" height="8.23" fill="#6666ff"/>
<rect x="516.31" y="489.45" width="8.23" height="8.23" fill="#6699ff"/>
<rect x="525.74" y="489.45" width="8.23" height="8.23" fill="#66ccff"/>
<rect x="535.17" y="489.45" width="8.23" height="8.23" fill="#66ffff"/>
<rect x="356.00" y="498.88" width="8.23" height="8.23" fill="#ff0000"/>
<rect x="374.86" y="498.88" width="8.23" height="8.23" fill="#990000"/>
<rect x="384.29" y="498.88" width="8.23" height="8.23" fill="#993300"/>
<rect x="393.72" y="498.88" width="8.23" height="8.23" fill="#996600"/>
<rect x="403.15" y="498.88" width="8.23" height="8.23" fill="#999900"/>
<rect x="412.58" y="498.88" width="8.23" height="8.23" fill="#99cc00"/>
<rect x="422.01" y="498.88" width="8.23" height="8.23" fill="#99ff00"/>
<rect x="431.44" y="498.88" width="8.23" height="8.23" fill="#cc0000"/>
<rect x="440.87" y="498.88" width="8.23" height="8.23" fill="#cc3300"/>
<rect x="450.30" y="498.88" width="8.23" height="8.23" fill="#cc6600"/>
<rect x="459.73" y="498.88" width="8.23" height="8.23" fill="#cc9900"/>
<rect x="469.16" y="498.88" width="8.23" height="8.23" fill="#cccc00"/>
<rect x="478.59" y="498.88" width="8.23" height="8.23" fill="#ccff00"/>
<rect x="488.02" y="498.88" width="8.23" height="8.23" fill="#ff0000"/>
<rect x="497.45" y="498.88" width="8.23" height="8.23" fill="#ff3300"/>
<rect x="506.88" y="498.88" width="8.23" height="8.23" fill="#ff6600"/>
<rect x="516.31" y="498.88" width="8.23" height="8.23" fill="#ff9900"/>
<rect x="525.74" y="498.88" width="8.23" height="8.23" fill="#ffcc00"/>
<rect x="535.17" y="498.88" width="8.23" height="8.23" fill="#ffff00"/>
<rect x="356.00" y="508.31" width="8.23" height="8.23" fill="#00ff00"/>
<rect x="374.86" y="508.31" width="8.23" height="8.23" fill="#990033"/>
<rect x="384.29" y="508.31" width="8.23" height="8.23" fill="#993333"/>
<rect x="393.72" y="508.31" width="8.23" height="8.23" fill="#996633"/>
<rect x="403.15" y="508.31" width="8.23" height="8.23" fill="#999933"/>
<rect x="412.58" y="508.31" width="8.23" height="8.23" fill="#99cc33"/>
<rect x="422.01" y="508.31" width="8.23" height="8.23" fill="#99ff33"/>
<rect x="431.44" y="508.31" width="8.23" height="8.23" fill="#cc0033"/>
<rect x="440.87" y="508.31" width="8.23" height="8.23" fill="#cc3333"/>
<rect x="450.30" y="508.31" width="8.23" height="8.23" fill="#cc6633"/>
<rect x="459.73" y="508.31" width="8.23" height="8.23" fill="#cc9933"/>
<rect x="469.16" y="508.31" width="8.23" height="8.23" fill="#cccc33"/>
<rect x="478.59" y="508.31" width="8.23" height="8.23" fill="#ccff33"/>
<rect x="488.02" y="508.31" width="8.23" height="8.23" fill="#ff0033"/>
<rect x="497.45" y="508.31" width="8.23" height="8.23" fill="#ff3333"/>
<rect x="506.88" y="508.31" width="8.23" height="8.23" fill="#ff6633"/>
<rect x="516.31" y="508.31" width="8.23" height="8.23" fill="#ff9933"/>
<rect x="525.74" y="508.31" width="8.23" height="8.23" fill="#ffcc33"/>
<rect x="535.17" y="508.31" width="8.23" height="8.23" fill="#ffff33"/>
<rect x="356.00" y="517.74" width="8.23" height="8.23" fill="#0000ff"/>
<rect x="374.86" y="517.74" width="8.23" height="8.23" fill="#990066"/>
<rect x="384.29" y="517.74" width="8.23" height="8.23" fill="#993366"/>
<rect x="393.72" y="517.74" width="8.23" height="8.23" fill="#996666"/>
<rect x="403.15" y="517.74" width="8.23" height="8.23" fill="#999966"/>
<rect x="412.58" y="517.74" width="8.23" height="8.23" fill="#99cc66"/>
<rect x="422.01" y="517.74" width="8.23" height="8.23" fill="#99ff66"/>
<rect x="431.44" y="517.74" width="8.23" height="8.23" fill="#cc0066"/>
<rect x="440.87" y="517.74" width="8.23" height="8.23" fill="#cc3366"/>
<rect x="450.30" y="517.74" width="8.23" height="8.23" fill="#cc6666"/>
<rect x="459.73" y="517.74" width="8.23" height="8.23" fill="#cc9966"/>
<rect x="469.16" y="517.74" width="8.23" height="8.23" fill="#cccc66"/>
<rect x="478.59" y="517.74" width="8.23" height="8.23" fill="#ccff66"/>
<rect x="488.02" y="517.74" width="8.23" height="8.23" fill="#ff0066"/>
<rect x="497.45" y="517.74" width="8.23" height="8.23" fill="#ff3366"/>
<rect x="506.88" y="517.74" width="8.23" height="8.23" fill="#ff6666"/>
<rect x="516.31" y="517.74" width="8.23" height="8.23" fill="#ff9966"/>
<rect x="525.74" y="517.74" width="8.23" height="8.23" fill="#ffcc66"/>
<rect x="535.17" y="517.74" width="8.23" height="8.23" fill="#ffff66"/>
<rect x="356.00" y="527.17" width="8.23" height="8.23" fill="#ffff00"/>
<rect x="374.86" y="527.17" width="8.23" height="8.23" fill="#990099"/>
<rect x="384.29" y="527.17" width="8.23" height="8.23" fill="#993399"/>
<rect x="393.72" y="527.17" width="8.23" height="8.23" fill="#996699"/>
<rect x="403.15" y="527.17" width="8.23" height="8.23" fill="#999999"/>
<rect x="412.58" y="527.17" width="8.23" height="8.23" fill="#99cc99"/>
<rect x="422.01" y="527.17" width="8.23" height="8.23" fill="#99ff99"/>
<rect x="431.44" y="527.17" width="8.23" height="8.23" fill="#cc0099"/>
<rect x="440.87" y="527.17" width="8.23" height="8.23" fill="#cc3399"/>
<rect x="450.30" y="527.17" width="8.23" height="8.23" fill="#cc6699"/>
<rect x="459.73" y="527.17" width="8.23" height="8.23" fill="#cc9999"/>
<rect x="469.16" y="527.17" width="8.23" height="8.23" fill="#cccc99"/>
<rect x="478.59" y="527.17" width="8.23" height="8.23" fill="#ccff99"/>
<rect x="488.02" y="527.17" width="8.23" height="8.23" fill="#ff0099"/>
<rect x="497.45" y="527.17" width="8.23" height="8.23" fill="#ff3399"/>
<rect x="506.88" y="527.17" width="8.23" height="8.23" fill="#ff6699"/>
<rect x="516.31" y="527.17" width="8.23" height="8.23" fill="#ff9999"/>
<rect x="525.74" y="527.17" width="8.23" height="8.23" fill="#ffcc99"/>
<rect x="535.17" y="527.17" width="8.23" height="8.23" fill="#ffff99"/>
<rect x="356.00" y="536.60" width="8.23" height="8.23" fill="#00ffff"/>
<rect x="374.86" y="536.60" width="8.23" height="8.23" fill="#9900cc"/>
<rect x="384.29" y="536.60" width="8.23" height="8.23" fill="#9933cc"/>
<rect x="393.72" y="536.60" width="8.23" height="8.23" fill="#9966cc"/>
<rect x="403.15" y="536.60" width="8.23" height="8.23" fill="#9999cc"/>
<rect x="412.58" y="536.60" width="8.23" height="8.23" fill="#99cccc"/>
<rect x="422.01" y="536.60" width="8.23" height="8.23" fill="#99ffcc"/>
<rect x="431.44" y="536.60" width="8.23" height="8.23" fill="#cc00cc"/>
<rect x="440.87" y="536.60" width="8.23" height="8.23" fill="#cc33cc"/>
<rect x="450.30" y="536.60" width="8.23" height="8.23" fill="#cc66cc"/>
<rect x="459.73" y="536.60" width="8.23" height="8.23" fill="#cc99cc"/>
<rect x="469.16" y="536.60" width="8.23" height="8.23" fill="#cccccc"/>
<rect x="478.59" y="536.60" width="8.23" height="8.23" fill="#ccffcc"/>
<rect x="488.02" y="536.60" width="8.23" height="8.23" fill="#ff00cc"/>
<rect x="497.45" y="536.60" width="8.23" height="8.23" fill="#ff33cc"/>
<rect x="506.88" y="536.60" width="8.23" height="8.23" fill="#ff66cc"/>
<rect x="516.31" y="536.60" width="8.23" height="8.23" fill="#ff99cc"/>
<rect x="525.74" y="536.60" width="8.23" height="8.23" fill="#ffcccc"/>
<rect x="535.17" y="536.60" width="8.23" height="8.23" fill="#ffffcc"/>
<rect x="356.00" y="546.03" width="8.23" height="8.23" fill="#ff00ff"/>
<rect x="374.86" y="546.03" width="8.23" height="8.23" fill="#9900ff"/>
<rect x="384.29" y="546.03" width="8.23" height="8.23" fill="#9933ff"/>
<rect x="393.72" y="546.03" width="8.23" height="8.23" fill="#9966ff"/>
<rect x="403.15" y="546.03" width="8.23" height="8.23" fill="#9999ff"/>
<rect x="412.58" y="546.03" width="8.23" height="8.23" fill="#99ccff"/>
<rect x="422.01" y="546.03" width="8.23" height="8.23" fill="#99ffff"/>
<rect x="431.44" y="546.03" width="8.23" height="8.23" fill="#cc00ff"/>
<rect x="440.87" y="546.03" width="8.23" height="8.23" fill="#cc33ff"/>
<rect x="450.30" y="546.03" width="8.23" height="8.23" fill="#cc66ff"/>
<rect x="459.73" y="546.03" width="8.23" height="8.23" fill="#cc99ff"/>
<rect x="469.16" y="546.03" width="8.23" height="8.23" fill="#ccccff"/>
<rect x="478.59" y="546.03" width="8.23" height="8.23" fill="#ccffff"/>
<rect x="488.02" y="546.03" width="8.23" height="8.23" fill="#ff00ff"/>
<rect x="497.45" y="546.03" width="8.23" height="8.23" fill="#ff33ff"/>
<rect x="506.88" y="546.03" width="8.23" height="8.23" fill="#ff66ff"/>
<rect x="516.31" y="546.03" width="8.23" height="8.23" fill="#ff99ff"/>
<rect x="525.74" y="546.03" width="8.23" height="8.23" fill="#ffccff"/>
<rect x="535.17" y="546.03" width="8.23" height="8.23" fill="#ffffff"/>
<rect x="421.61" y="451.33" width="9.03" height="9.03" fill="#00ff33" stroke="#e8ffe8" stroke-width="1.2"/>
</svg>
</body></html>
